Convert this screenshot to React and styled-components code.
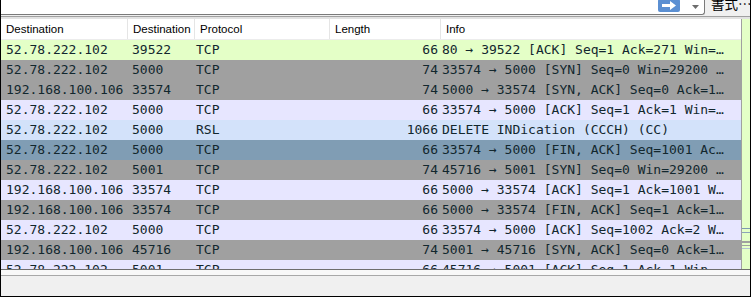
import styled, { createGlobalStyle } from "styled-components";

const GlobalStyle = createGlobalStyle`
  html, body {
    margin: 0;
    padding: 0;
    background: #ffffff;
  }
  #root {
    width: 751px;
    height: 297px;
  }
`;

const columns = [
  { key: "dst", title: "Destination", width: 127, pad: 5, align: "left" },
  { key: "port", title: "Destination", width: 67, pad: 4, align: "left" },
  { key: "proto", title: "Protocol", width: 135, pad: 1, align: "left" },
  { key: "len", title: "Length", width: 111, pad: 3, align: "right" },
  { key: "info", title: "Info", width: 300, pad: 1, align: "left" },
];

const rowColors = {
  http: "#e4ffc7",
  syn: "#a0a0a0",
  tcp: "#e7e6ff",
  rsl: "#d3e2fa",
  selected: "#809db4",
};

const packets = [
  { dst: "52.78.222.102", port: "39522", proto: "TCP", len: "66", info: "80 → 39522 [ACK] Seq=1 Ack=271 Win=…", kind: "http" },
  { dst: "52.78.222.102", port: "5000", proto: "TCP", len: "74", info: "33574 → 5000 [SYN] Seq=0 Win=29200 …", kind: "syn" },
  { dst: "192.168.100.106", port: "33574", proto: "TCP", len: "74", info: "5000 → 33574 [SYN, ACK] Seq=0 Ack=1…", kind: "syn" },
  { dst: "52.78.222.102", port: "5000", proto: "TCP", len: "66", info: "33574 → 5000 [ACK] Seq=1 Ack=1 Win=…", kind: "tcp" },
  { dst: "52.78.222.102", port: "5000", proto: "RSL", len: "1066", info: "DELETE INDication (CCCH) (CC)", kind: "rsl" },
  { dst: "52.78.222.102", port: "5000", proto: "TCP", len: "66", info: "33574 → 5000 [FIN, ACK] Seq=1001 Ac…", kind: "selected" },
  { dst: "52.78.222.102", port: "5001", proto: "TCP", len: "74", info: "45716 → 5001 [SYN] Seq=0 Win=29200 …", kind: "syn" },
  { dst: "192.168.100.106", port: "33574", proto: "TCP", len: "66", info: "5000 → 33574 [ACK] Seq=1 Ack=1001 W…", kind: "tcp" },
  { dst: "192.168.100.106", port: "33574", proto: "TCP", len: "66", info: "5000 → 33574 [FIN, ACK] Seq=1 Ack=1…", kind: "syn" },
  { dst: "52.78.222.102", port: "5000", proto: "TCP", len: "66", info: "33574 → 5000 [ACK] Seq=1002 Ack=2 W…", kind: "tcp" },
  { dst: "192.168.100.106", port: "45716", proto: "TCP", len: "74", info: "5001 → 45716 [SYN, ACK] Seq=0 Ack=1…", kind: "syn" },
  { dst: "52.78.222.102", port: "5001", proto: "TCP", len: "66", info: "45716 → 5001 [ACK] Seq=1 Ack=1 Win=…", kind: "tcp" },
];

export default function App() {
  return (
    <>
      <GlobalStyle />
      <Frame>
        <TopBar>
          <FilterInput>
            <ApplyButton>
              <svg width="14" height="9" viewBox="0 0 14 9">
                <path d="M0 3h8V0l6 4.5L8 9V6H0z" fill="#ffffff" />
              </svg>
            </ApplyButton>
            <Caret>
              <svg width="7" height="4" viewBox="0 0 7 4">
                <path d="M0 0h7L3.5 4z" fill="#6d6d6d" />
              </svg>
            </Caret>
          </FilterInput>
          <FormatLabel>書式…</FormatLabel>
        </TopBar>
        <Divider />

        <Main>
          <PacketTable>
            <HeaderRow>
              {columns.map((c, i) => (
                <HeaderCell key={i} width={c.width}>{c.title}</HeaderCell>
              ))}
            </HeaderRow>
            {packets.map((p, i) => (
              <PacketRow key={i} bg={rowColors[p.kind]}>
                {columns.map((c) => (
                  <Cell key={c.key} width={c.width} pad={c.pad} align={c.align}>
                    {p[c.key]}
                  </Cell>
                ))}
              </PacketRow>
            ))}
          </PacketTable>

          <ScrollTrack>
            <svg width="8" height="250" viewBox="0 0 8 250">
              <rect x="0" y="209" width="8" height="1" fill="#7e9ab1" />
              <rect x="0" y="213" width="8" height="1" fill="#8ba3b9" />
              <rect x="0" y="222" width="8" height="2" fill="#a0a0a0" />
              <rect x="0" y="226" width="8" height="1" fill="#a0a0a0" />
              <rect x="0" y="229" width="8" height="1" fill="#b3c2d4" />
            </svg>
          </ScrollTrack>
        </Main>

        <StatusArea />
      </Frame>
    </>
  );
}

const Frame = styled.div`
  width: 751px;
  height: 297px;
  box-sizing: border-box;
  border-left: 1px solid #000000;
  border-right: 1px solid #000000;
  border-bottom: 1px solid #000000;
  background-color: #f0f0f0;
  display: flex;
  flex-direction: column;
  overflow: hidden;
`;

const TopBar = styled.div`
  height: 15px;
  display: flex;
  flex-shrink: 0;
`;

const FilterInput = styled.div`
  width: 704px;
  box-sizing: border-box;
  background-color: #ffffff;
  border-bottom: 1px solid #7a7a7a;
  border-right: 1px solid #7a7a7a;
  border-bottom-right-radius: 3px;
  display: flex;
  justify-content: flex-end;
  align-items: flex-start;
  padding-right: 5px;
`;

const ApplyButton = styled.div`
  width: 22px;
  height: 13px;
  margin-top: -1px;
  border-radius: 2px;
  background-color: #5b8fd2;
  display: flex;
  align-items: center;
  justify-content: center;
`;

const Caret = styled.div`
  width: 8px;
  margin-left: 11px;
  padding-top: 5px;
  display: flex;
  justify-content: center;
`;

const FormatLabel = styled.div`
  flex: 1;
  padding-left: 6px;
  margin-top: -6px;
  font-family: "Noto Sans CJK JP", sans-serif;
  font-size: 13.5px;
  line-height: 19px;
  color: #000000;
  white-space: nowrap;
  overflow: hidden;
`;

const Divider = styled.div`
  height: 4px;
  flex-shrink: 0;
  box-sizing: border-box;
  border-top: 1px solid #f0f0f0;
  border-bottom: 2px solid #e2e2e2;
  background-color: #a0a0a0;
`;

const Main = styled.div`
  height: 250px;
  flex-shrink: 0;
  display: flex;
  background-color: #ffffff;
`;

const PacketTable = styled.div`
  flex: 1;
  overflow: hidden;
  display: flex;
  flex-direction: column;
`;

const HeaderRow = styled.div`
  height: 21px;
  flex-shrink: 0;
  box-sizing: border-box;
  display: flex;
  background-color: #ffffff;
  border-bottom: 1px solid #ececec;
`;

const HeaderCell = styled.div`
  width: ${(props) => props.width}px;
  flex-shrink: 0;
  box-sizing: border-box;
  padding-left: 5px;
  border-right: 1px solid #e5e5e5;
  font-family: "Liberation Sans", Arial, sans-serif;
  font-size: 11.5px;
  line-height: 20px;
  color: #000000;
  white-space: nowrap;
  overflow: hidden;

  &:last-child {
    flex: 1;
    border-right: none;
  }
`;

const PacketRow = styled.div`
  height: 20px;
  flex-shrink: 0;
  display: flex;
  background-color: ${(props) => props.bg};
`;

const Cell = styled.div`
  width: ${(props) => props.width}px;
  flex-shrink: 0;
  box-sizing: border-box;
  padding: ${(props) => (props.align === "right" ? `0 ${props.pad}px 0 0` : `0 0 0 ${props.pad}px`)};
  text-align: ${(props) => props.align};
  font-family: "DejaVu Sans Mono", "Liberation Mono", monospace;
  font-size: 13px;
  line-height: 20px;
  color: #12272e;
  white-space: nowrap;
  overflow: hidden;

  &:last-child {
    flex: 1;
  }
`;

const ScrollTrack = styled.div`
  width: 9px;
  flex-shrink: 0;
  box-sizing: border-box;
  border-left: 1px solid #a0a0a0;
  background-color: #e4ffc7;
  overflow: hidden;

  svg {
    display: block;
  }
`;

const StatusArea = styled.div`
  flex: 1;
  box-sizing: border-box;
  border-top: 1px solid #6e6e6e;
  background-color: #f0f0f0;

  &::before {
    content: "";
    display: block;
    height: 5px;
    background-color: #f8f8f8;
    border-bottom: 1px solid #a8a8a8;
  }
`;
